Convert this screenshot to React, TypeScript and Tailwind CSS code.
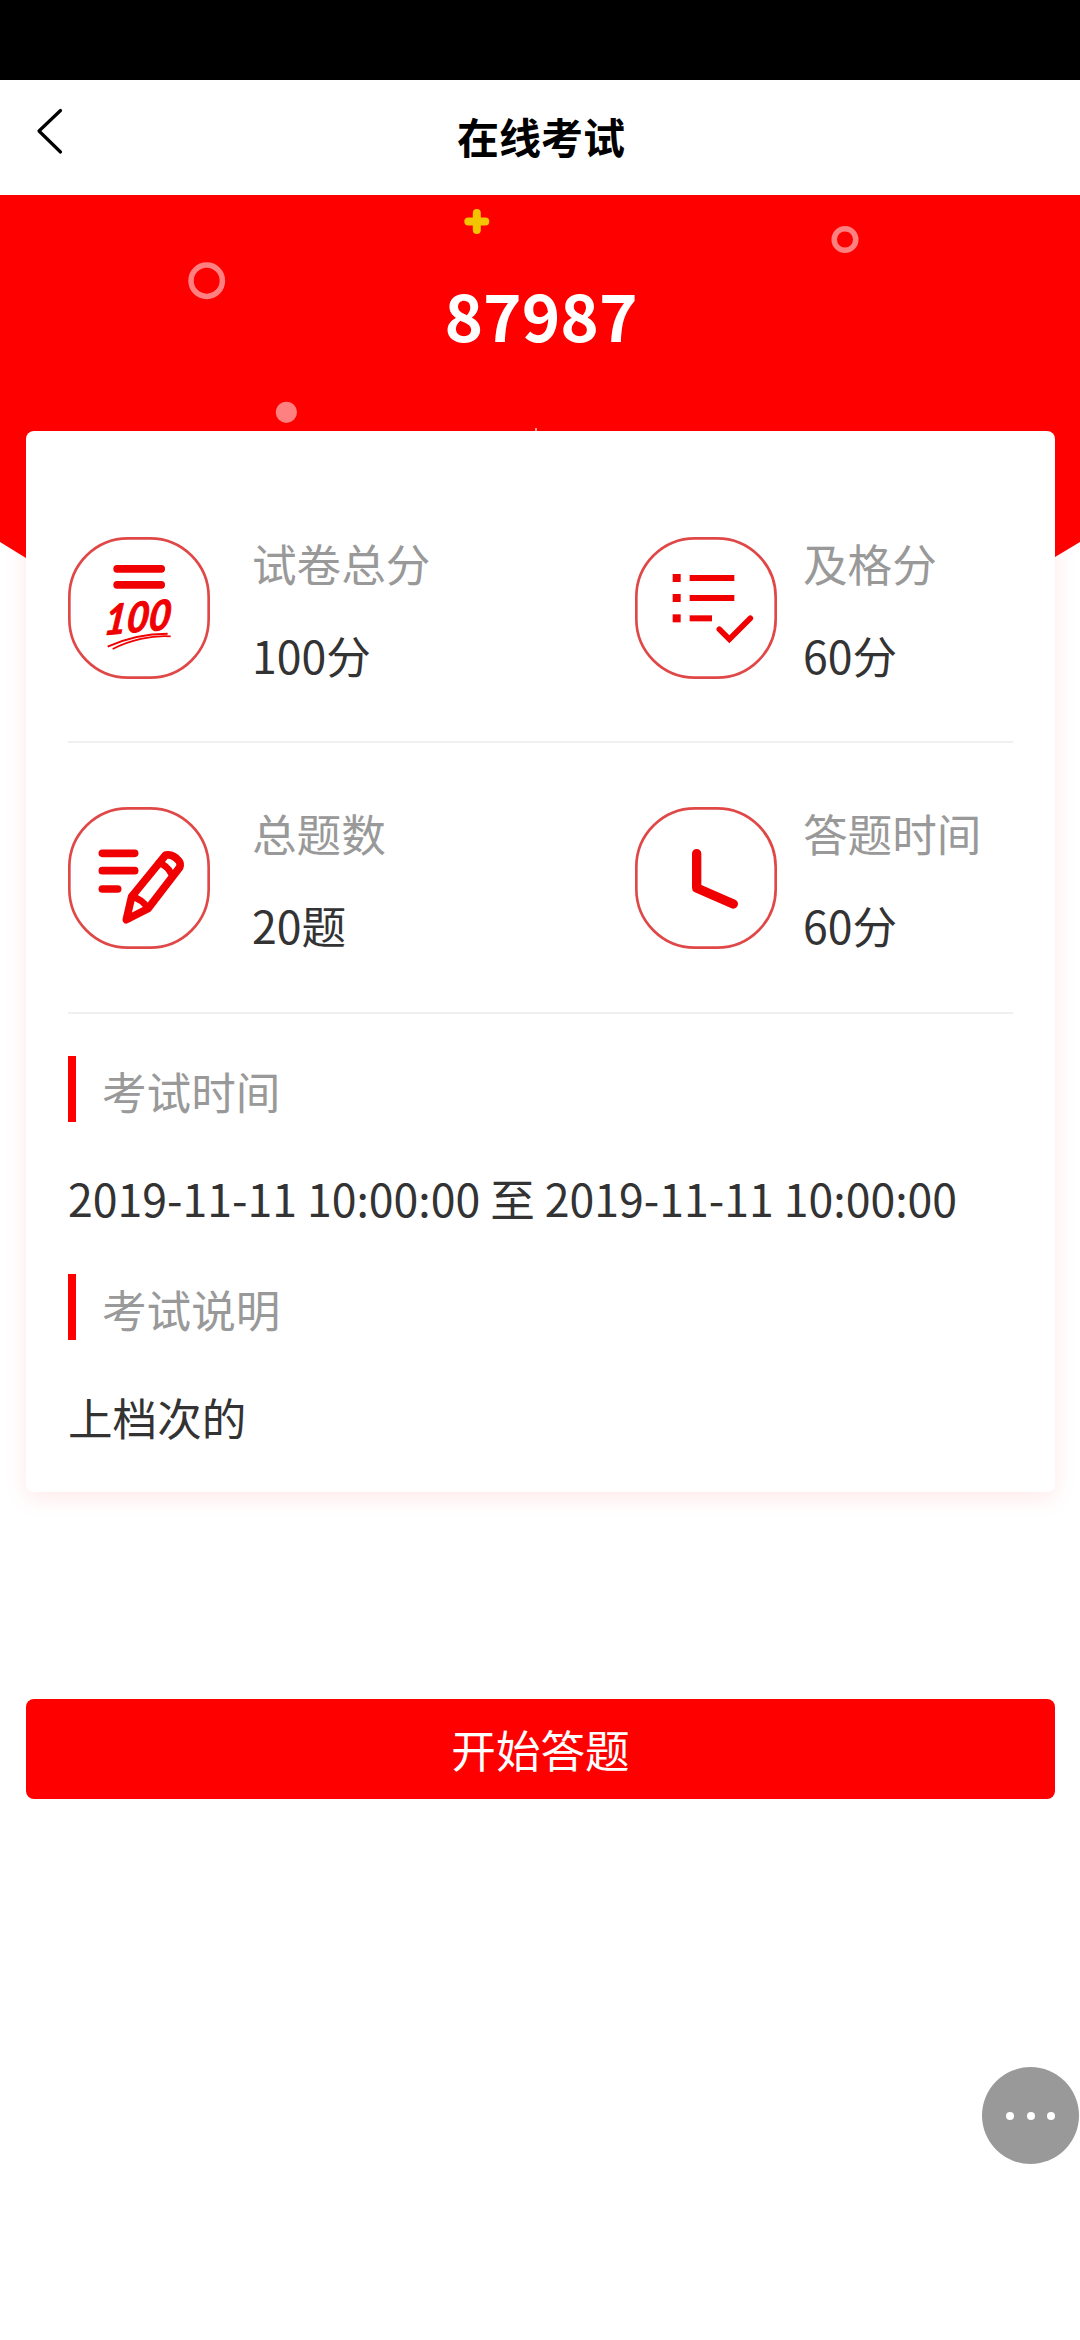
import React from 'react'

type StatProps = {
  icon: React.ReactNode;
  label: string;
  value: string;
  side: 'left' | 'right';
};

// 试卷总分
function ScoreIcon() {
  return (
    <svg viewBox="0 0 426 426" className="w-[142px] h-[142px] shrink-0" fill="none">
      <rect x="4" y="4" width="418" height="418" rx="176" stroke="#e04848" strokeWidth="8" />
      <rect x="136" y="84" width="155" height="23" rx="11" fill="#f00000" />
      <rect x="136" y="132" width="155" height="23" rx="11" fill="#f00000" />
      <text
        transform="translate(106 294) rotate(-5) skewX(-12)"
        fontFamily="Lato, sans-serif"
        fontStyle="italic"
        fontWeight="bold"
        fontSize="124"
        textLength="200"
        lengthAdjust="spacingAndGlyphs"
        fill="#f00000"
        stroke="#f00000"
        strokeWidth="3"
        strokeLinejoin="round"
      >
        100
      </text>
      <path d="M119 329C175 303 235 290 299 290" stroke="#f00000" strokeWidth="6" />
      <path d="M134 336C185 310 250 294 308 298" stroke="#f00000" strokeWidth="5" />
    </svg>
  );
}

// 及格分
function PassIcon() {
  return (
    <svg viewBox="0 0 426 426" className="w-[142px] h-[142px] shrink-0" fill="none">
      <rect x="4" y="4" width="418" height="418" rx="176" stroke="#e04848" strokeWidth="8" />
      <g fill="#f00000">
        <rect x="113" y="111" width="24" height="24" />
        <rect x="113" y="171" width="24" height="24" />
        <rect x="113" y="232" width="24" height="24" />
        <rect x="164" y="114" width="134" height="18" />
        <rect x="164" y="174" width="134" height="18" />
        <rect x="164" y="235" width="67" height="18" />
      </g>
      <path d="M253 277L283 307L346 244" stroke="#f00000" strokeWidth="17" strokeLinecap="round" />
    </svg>
  );
}

// 总题数
function QuestionIcon() {
  return (
    <svg viewBox="0 0 426 426" className="w-[142px] h-[142px] shrink-0" fill="none">
      <rect x="4" y="4" width="418" height="418" rx="176" stroke="#e04848" strokeWidth="8" />
      <g stroke="#f00000" strokeLinecap="round" strokeLinejoin="round">
        <path d="M103 139H200M103 191H200M103 246H149" strokeWidth="23" />
        <path d="M191 269L293 144Q316 140 333 162Q339 170 335 181L240 305L175 338Z" strokeWidth="23" />
        <path d="M191 269Q224 276 240 305" strokeWidth="20" />
        <path d="M272 168Q298 175 311 202" strokeWidth="20" />
      </g>
    </svg>
  );
}

// 答题时间
function TimeIcon() {
  return (
    <svg viewBox="0 0 426 426" className="w-[142px] h-[142px] shrink-0" fill="none">
      <rect x="4" y="4" width="418" height="418" rx="176" stroke="#e04848" strokeWidth="8" />
      <path d="M185 140V243L295 291" stroke="#f00000" strokeWidth="28" strokeLinecap="round" strokeLinejoin="round" />
    </svg>
  );
}

function Stat({ icon, label, value, side }: StatProps) {
  return (
    <div className={side === 'left' ? 'w-[60%] flex items-center gap-[42px]' : 'w-[40%] flex items-center gap-[26px]'}>
      {icon}
      <div className="pt-0.5 leading-[92px] whitespace-nowrap">
        <p className="text-[#999]">{label}</p>
        <p>{value}</p>
      </div>
    </div>
  );
}

export default function ExamDetail() {
  return (
    <div
      className="relative w-[1080px] h-[2340px] bg-white text-[#333] text-[44.6px] overflow-hidden font-['Noto_Sans_CJK_SC',sans-serif]"
    >
      {/* Status bar */}
      <div className="h-20 bg-black"></div>

      {/* Header */}
      <header className="relative h-[115px] pb-1 flex items-center justify-center">
        <button className="absolute left-[34px] top-[26px]">
          <svg width="32" height="50" viewBox="0 0 32 50" fill="none" stroke="#000" strokeWidth="3.2" strokeLinecap="round" strokeLinejoin="round">
            <path d="M26.500 4.500L5 25L26.500 46"></path>
          </svg>
        </button>
        <h1 className="pl-0.5 text-[42px] font-bold text-black leading-[60px]">在线考试</h1>
      </header>

      <main className="relative">
        {/* Banner background */}
        <svg className="absolute left-0 top-0" width="1080" height="700" viewBox="0 195 1080 700" fill="none">
          <path d="M0 195H1080V542L1055 557L540 800L26 558L0 542Z" fill="#f00" />
          <circle cx="206.700" cy="280.700" r="15.700" stroke="#ff8080" strokeWidth="5.500" />
          <circle cx="845" cy="239.500" r="10.800" stroke="#ff8080" strokeWidth="5.500" />
          <circle cx="286.400" cy="412.300" r="10.600" fill="#ff8080" />
          <path d="M476.800 213V230M468.300 221.500H485.300" stroke="#f2c500" strokeWidth="8" strokeLinecap="round" />
          <path d="M536 428V432" stroke="#ff9c9c" strokeWidth="2" />
        </svg>

        <div className="relative h-[236px] pt-[69px] text-center">
          <h2 className="pl-0.5 text-[65.5px] leading-[100px] font-bold text-white">87987</h2>
        </div>

        {/* Exam info card */}
        <section className="relative mx-[26px] mr-[25px] h-[1061px] px-[42px] bg-white rounded-lg shadow-[0_6px_24px_rgba(255,0,0,0.09)]">
          <div className="flex items-center h-[312px] pt-[44px] border-b-2 border-[#f0f0f0]">
            <Stat side="left" icon={<ScoreIcon />} label="试卷总分" value="100分" />
            <Stat side="right" icon={<PassIcon />} label="及格分" value="60分" />
          </div>
          <div className="flex items-center h-[271px] border-b-2 border-[#f0f0f0]">
            <Stat side="left" icon={<QuestionIcon />} label="总题数" value="20题" />
            <Stat side="right" icon={<TimeIcon />} label="答题时间" value="60分" />
          </div>

          <div className="pt-[42px]">
            <h3 className="h-[66px] border-l-8 border-[#f00] pl-[26px] leading-[70px] text-[#999]">考试时间</h3>
            <p className="h-[152px] leading-[152px] whitespace-nowrap">2019-11-11 10:00:00 至 2019-11-11 10:00:00</p>
            <h3 className="h-[66px] border-l-8 border-[#f00] pl-[26px] leading-[70px] text-[#999]">考试说明</h3>
            <p className="h-[152px] leading-[153px]">上档次的</p>
          </div>
        </section>

        {/* Start button */}
        <button className="relative block w-[1029px] h-[100px] mt-[207px] ml-[26px] rounded-lg bg-[#f00] text-white leading-[100px]">
          开始答题
        </button>
      </main>

      {/* Floating menu */}
      <button className="absolute left-[982px] top-[2067px] w-[97px] h-[97px] rounded-full bg-[#999] flex items-center justify-center gap-[12.500px]">
        <span className="w-2 h-2 rounded-full bg-white"></span>
        <span className="w-2 h-2 rounded-full bg-white"></span>
        <span className="w-2 h-2 rounded-full bg-white"></span>
      </button>
    </div>
  )
}
